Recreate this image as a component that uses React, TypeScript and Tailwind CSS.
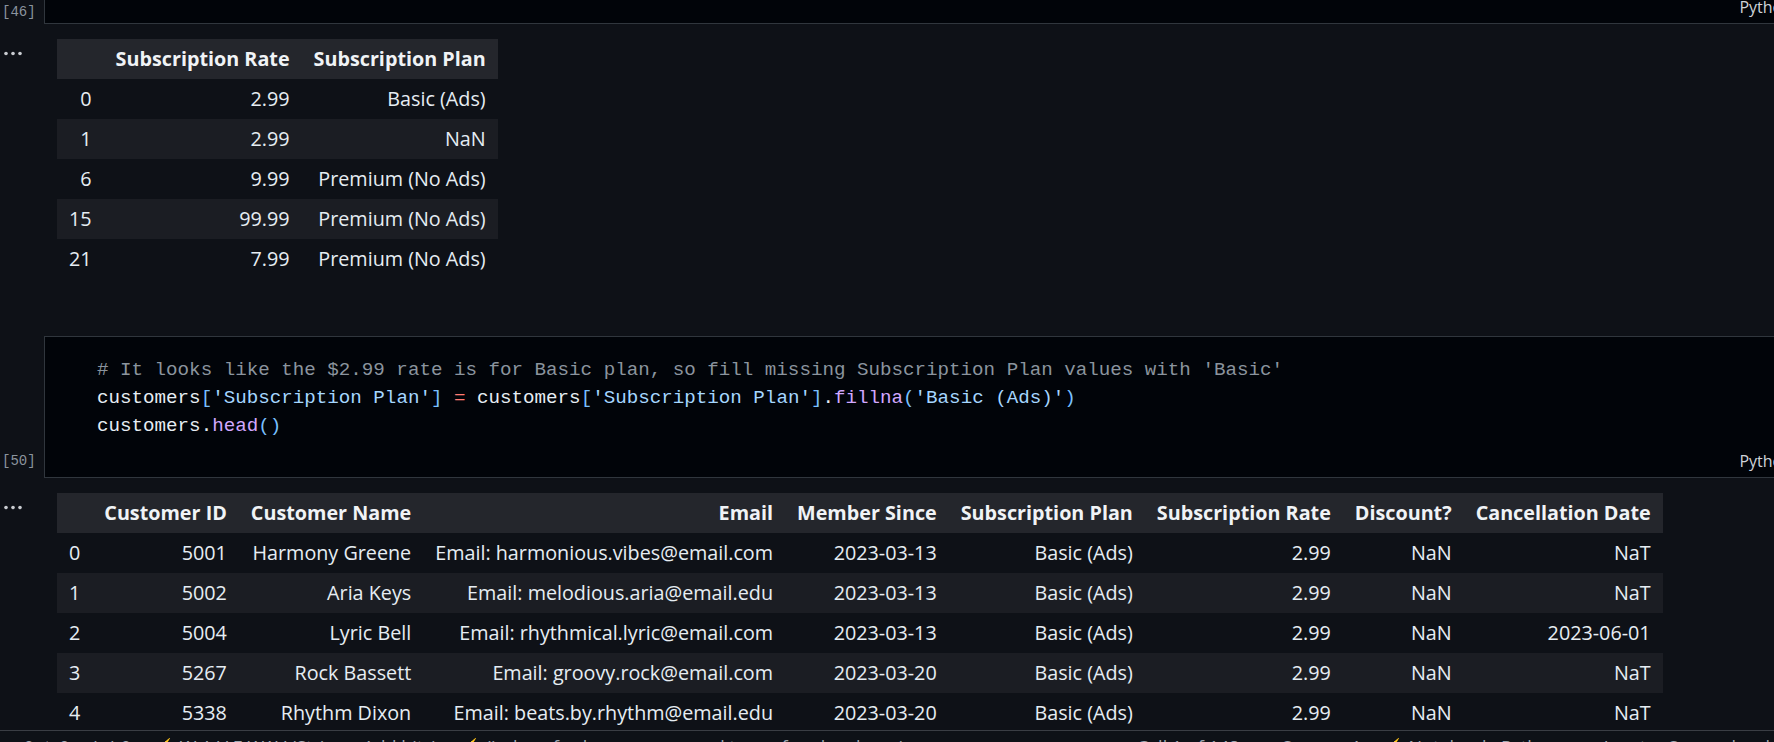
import React from "react";

type Row = { index: string; cells: string[] };

const rateColumns = ["Subscription Rate", "Subscription Plan"];
const rateRows: Row[] = [
  { index: "0", cells: ["2.99", "Basic (Ads)"] },
  { index: "1", cells: ["2.99", "NaN"] },
  { index: "6", cells: ["9.99", "Premium (No Ads)"] },
  { index: "15", cells: ["99.99", "Premium (No Ads)"] },
  { index: "21", cells: ["7.99", "Premium (No Ads)"] },
];

const customerColumns = [
  "Customer ID",
  "Customer Name",
  "Email",
  "Member Since",
  "Subscription Plan",
  "Subscription Rate",
  "Discount?",
  "Cancellation Date",
];
const customerRows: Row[] = [
  { index: "0", cells: ["5001", "Harmony Greene", "Email: harmonious.vibes@email.com", "2023-03-13", "Basic (Ads)", "2.99", "NaN", "NaT"] },
  { index: "1", cells: ["5002", "Aria Keys", "Email: melodious.aria@email.edu", "2023-03-13", "Basic (Ads)", "2.99", "NaN", "NaT"] },
  { index: "2", cells: ["5004", "Lyric Bell", "Email: rhythmical.lyric@email.com", "2023-03-13", "Basic (Ads)", "2.99", "NaN", "2023-06-01"] },
  { index: "3", cells: ["5267", "Rock Bassett", "Email: groovy.rock@email.com", "2023-03-20", "Basic (Ads)", "2.99", "NaN", "NaT"] },
  { index: "4", cells: ["5338", "Rhythm Dixon", "Email: beats.by.rhythm@email.edu", "2023-03-20", "Basic (Ads)", "2.99", "NaN", "NaT"] },
];

// pandas-style dataframe table
const DataFrame: React.FC<{ columns: string[]; rows: Row[] }> = ({ columns, rows }) => (
  <table className="border-collapse text-[19.75px] leading-[26px] text-[#e6edf3]">
    <thead>
      <tr className="h-[40px] bg-[#24262c]">
        <th className="px-[12px]" />
        {columns.map((c) => (
          <th key={c} className="px-[12px] text-right font-bold whitespace-nowrap text-[#f0f3f6]">
            {c}
          </th>
        ))}
      </tr>
    </thead>
    <tbody>
      {rows.map((r, i) => (
        <tr key={r.index} className={`h-[40px] ${i % 2 === 1 ? "bg-[#1b1d23]" : ""}`}>
          <th className="px-[12px] text-right font-normal">{r.index}</th>
          {r.cells.map((v, j) => (
            <td key={j} className="px-[12px] text-right whitespace-nowrap">
              {v}
            </td>
          ))}
        </tr>
      ))}
    </tbody>
  </table>
);

const Dots = () => (
  <svg width="20" height="5" viewBox="0 0 20 5" className="ml-[2px]">
    <circle cx="3" cy="2.5" r="1.8" fill="#c9ccd1" />
    <circle cx="10" cy="2.5" r="1.8" fill="#c9ccd1" />
    <circle cx="17" cy="2.5" r="1.8" fill="#c9ccd1" />
  </svg>
);

const mono = "font-['Liberation_Mono','DejaVu_Sans_Mono',monospace]";

const CellFooter: React.FC = () => (
  <div className="h-[33px] shrink-0 flex items-center justify-end overflow-hidden">
    <span className="-mr-[18px] text-[16px] text-[#cfd3d8] whitespace-nowrap">Python</span>
  </div>
);

const ExecLabel: React.FC<{ n: number }> = ({ n }) => (
  <div className="h-[33px] flex items-center pl-[2px]">
    <span className={`${mono} text-[14px] text-[#8b949e]`}>[{n}]</span>
  </div>
);

const Output: React.FC<{ children: React.ReactNode; className?: string }> = ({ children, className }) => (
  <div className={`flex shrink-0 ${className ?? ""}`}>
    <div className="w-[44px] shrink-0 pt-[27px] pl-[1px]">
      <Dots />
    </div>
    <div className="pl-[13px] pt-[15px]">{children}</div>
  </div>
);

export default function App() {
  return (
    <div className="w-full h-[742px] overflow-hidden bg-[#0e1117] flex flex-col font-['Open_Sans','Noto_Sans',sans-serif]">
      <div className="h-[730px] shrink-0 overflow-hidden flex flex-col">
        {/* previous cell, only its bottom is in view */}
        <div className="h-[24px] shrink-0 flex overflow-hidden">
          <div className="w-[44px] shrink-0 flex flex-col justify-end">
            <ExecLabel n={46} />
          </div>
          <div className="flex-1 flex flex-col justify-end bg-[#010409] border-l border-b border-[#30363d] overflow-hidden">
            <CellFooter />
          </div>
        </div>

        <Output className="h-[312px]">
          <DataFrame columns={rateColumns} rows={rateRows} />
        </Output>

        {/* code cell */}
        <div className="flex shrink-0">
          <div className="w-[44px] shrink-0 flex flex-col justify-end">
            <ExecLabel n={50} />
          </div>
          <div className="flex-1 bg-[#010409] border-t border-l border-b border-[#30363d] overflow-hidden">
            <div className={`${mono} text-[19.2px] leading-[28px] pl-[52px] pt-[19px] pb-[4px] whitespace-pre text-[#e6edf3]`}>
              <div className="text-[#8b949e]">
                # It looks like the $2.99 rate is for Basic plan, so fill missing Subscription Plan values with 'Basic'
              </div>
              <div>
                customers<span className="text-[#79c0ff]">[</span>
                <span className="text-[#a5d6ff]">'Subscription Plan'</span>
                <span className="text-[#79c0ff]">]</span> <span className="text-[#ff7b72]">=</span> customers
                <span className="text-[#79c0ff]">[</span>
                <span className="text-[#a5d6ff]">'Subscription Plan'</span>
                <span className="text-[#79c0ff]">]</span>.<span className="text-[#d2a8ff]">fillna</span>
                <span className="text-[#79c0ff]">(</span>
                <span className="text-[#a5d6ff]">'Basic (Ads)'</span>
                <span className="text-[#79c0ff]">)</span>
              </div>
              <div>
                customers.<span className="text-[#d2a8ff]">head</span>
                <span className="text-[#79c0ff]">()</span>
              </div>
            </div>
            <CellFooter />
          </div>
        </div>

        <Output>
          <DataFrame columns={customerColumns} rows={customerRows} />
        </Output>
      </div>

      {/* status bar, mostly below the fold */}
      <div className="h-[33px] shrink-0 border-t border-[#3a3d44] bg-[#0e1117] flex items-start pt-[7px] px-[4px] text-[18px] leading-none text-[#9da5ae] whitespace-nowrap gap-[22px]">
        <span>⊗ 0 ⚠ 0</span>
        <span>(ω) 0</span>
        <span>
          <span className="text-[#e3a33a]">⚡</span> W.A.V.E.WAV (Strings, Add bits)
        </span>
        <span>
          <span className="text-[#e3b341]">⚡</span> (index of column, name, and type of each column)
        </span>
        <span className="ml-auto">Cell 1 of 148</span>
        <span>◎ Spaces: 4</span>
        <span>
          <span className="text-[#e3a33a]">⚡</span> Notebook: Python
        </span>
        <span>▢ Jupyter Server: local</span>
      </div>
    </div>
  );
}
